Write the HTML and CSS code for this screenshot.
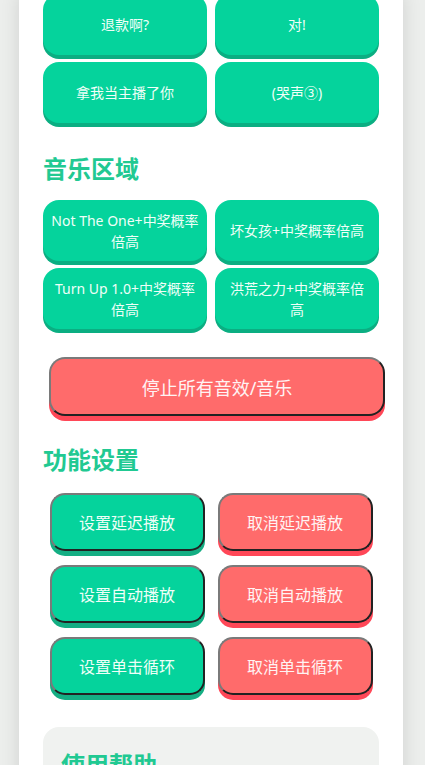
FILE: index.html
```html
<!DOCTYPE html>
<html lang="zh-CN">
<head>
<meta charset="utf-8">
<title>音效面板</title>
<link rel="stylesheet" href="styles.css">
</head>
<body>
<div class="card">
  <div class="grid first">
    <button class="btn">退款啊?</button>
    <button class="btn">对!</button>
    <button class="btn">拿我当主播了你</button>
    <button class="btn">(哭声③)</button>
  </div>

  <h2 class="title music-title">音乐区域</h2>
  <div class="grid">
    <button class="btn">Not The One+中奖概率倍高</button>
    <button class="btn">坏女孩+中奖概率倍高</button>
    <button class="btn">Turn Up 1.0+中奖概率倍高</button>
    <button class="btn narrow">洪荒之力+中奖概率倍高</button>
  </div>

  <button class="stop">停止所有音效/音乐</button>

  <h2 class="title func-title">功能设置</h2>
  <div class="func">
    <div class="func-row">
      <button class="fbtn on">设置延迟播放</button>
      <button class="fbtn off">取消延迟播放</button>
    </div>
    <div class="func-row">
      <button class="fbtn on">设置自动播放</button>
      <button class="fbtn off">取消自动播放</button>
    </div>
    <div class="func-row">
      <button class="fbtn on">设置单击循环</button>
      <button class="fbtn off">取消单击循环</button>
    </div>
  </div>

  <div class="help">
    <h2 class="help-title">使用帮助</h2>
  </div>
</div>
</body>
</html>
```

FILE: styles.css
```css
html, body {
  margin: 0;
  padding: 0;
}
body {
  background: #eceeec;
  font-family: "Noto Sans", "Noto Sans CJK SC", sans-serif;
  height: 765px;
  overflow: hidden;
}
.card {
  margin: 0 22px 0 19px;
  background: #ffffff;
  padding: 0 24px 40px 24px;
  box-shadow: 0 0 18px rgba(0, 0, 0, 0.12);
  min-height: 800px;
}
.grid {
  display: grid;
  grid-template-columns: 1fr 1fr;
  column-gap: 8px;
  row-gap: 7px;
}
.grid.first {
  margin-top: -6px;
}
.btn {
  font-family: inherit;
  border: none;
  background: #05d39c;
  color: #effff8;
  border-radius: 16px;
  box-shadow: 0 4px 0 #0bae82;
  min-height: 61px;
  padding: 8px 8px;
  font-size: 14px;
  line-height: 21px;
  display: flex;
  align-items: center;
  justify-content: center;
  text-align: center;
}
.btn.narrow {
  padding: 8px 12px;
}
.title {
  margin: 0;
  font-size: 24px;
  line-height: 32px;
  font-weight: 700;
  color: #21c992;
}
.music-title {
  margin: 30px 0 15px 0;
}
.stop {
  display: block;
  font-family: inherit;
  margin: 28px 0 0 6px;
  width: 100%;
  height: 59px;
  background: #ff6b6b;
  color: #fff3f3;
  font-size: 18px;
  border: 2px solid;
  border-color: #7a7a7a #222 #222 #7a7a7a;
  border-radius: 16px;
  box-shadow: 0 5px 0 #ff4757;
}
.func-title {
  margin: 28px 0 17px 0;
}
.func {
  display: flex;
  flex-direction: column;
  gap: 14px;
}
.func-row {
  display: flex;
  justify-content: space-around;
}
.fbtn {
  font-family: inherit;
  width: 155px;
  height: 58px;
  font-size: 16px;
  border: 2px solid;
  border-color: #7a7a7a #222 #222 #7a7a7a;
  border-radius: 15px;
}
.fbtn.on {
  background: #05d39c;
  color: #effff8;
  box-shadow: 0 5px 0 #14ae83;
}
.fbtn.off {
  background: #ff6b6b;
  color: #fff3f3;
  box-shadow: 0 5px 0 #ff4757;
}
.help {
  margin-top: 32px;
  background: #f0f2f0;
  border-radius: 16px;
  padding: 22px 18px 20px;
  min-height: 120px;
}
.help-title {
  margin: 0;
  font-size: 24px;
  line-height: 32px;
  font-weight: 700;
  color: #21c992;
}
```
